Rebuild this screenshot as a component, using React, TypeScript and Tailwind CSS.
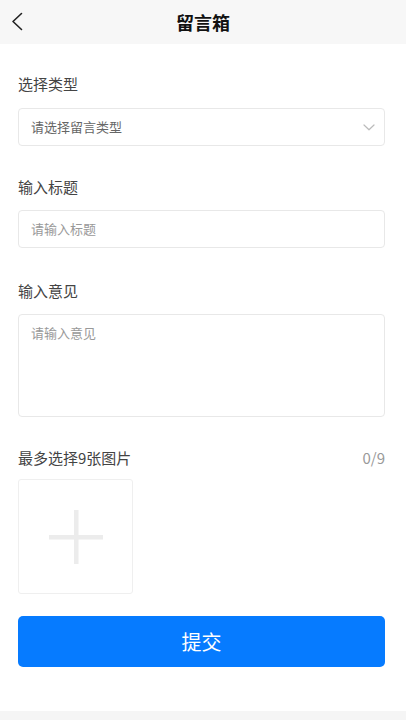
import React from "react";

const font = { fontFamily: '"Noto Sans CJK SC", "Noto Sans", sans-serif' };

export default function App() {
  return (
    <div className="min-h-[720px] w-full bg-[#f5f5f5]" style={font}>
      <div className="relative flex h-[44px] items-center justify-center bg-[#f7f7f7]">
        <svg
          className="absolute left-[10px] top-[12px]"
          width="14"
          height="19"
          viewBox="0 0 14 19"
          fill="none"
        >
          <path d="M11.5 1.5L3 9.5l8.5 8" stroke="#222" strokeWidth="1.6" strokeLinecap="round" strokeLinejoin="round" />
        </svg>
        <span className="text-[18px] font-bold leading-none text-[#111]">留言箱</span>
      </div>

      <div className="flex flex-col bg-white pb-[44px] pl-[18px] pr-[21px] pt-[30px]">
        <div className="h-[20px] text-[15px] leading-[20px] text-[#444]">选择类型</div>
        <div className="mt-[14px] flex h-[38px] items-center justify-between rounded-[4px] border border-[#e8e8e8] pl-[12px] pr-[9px]">
          <span className="text-[13px] text-[#666]">请选择留言类型</span>
          <svg width="12" height="7" viewBox="0 0 12 7" fill="none">
            <path d="M1 1l5 4.8L11 1" stroke="#bbb" strokeWidth="1.2" strokeLinecap="round" strokeLinejoin="round" />
          </svg>
        </div>

        <div className="mt-[31px] h-[20px] text-[15px] leading-[20px] text-[#444]">输入标题</div>
        <div className="mt-[13px] flex h-[38px] items-center rounded-[4px] border border-[#e8e8e8] px-[12px]">
          <span className="text-[13px] text-[#999]">请输入标题</span>
        </div>

        <div className="mt-[33px] h-[20px] text-[15px] leading-[20px] text-[#444]">输入意见</div>
        <div className="mt-[13px] h-[103px] rounded-[4px] border border-[#e8e8e8] px-[12px] pt-[4px]">
          <span className="text-[13px] leading-[20px] text-[#999]">请输入意见</span>
        </div>

        <div className="mt-[31px] flex h-[20px] items-center justify-between text-[15px] leading-[20px]">
          <span className="text-[#444]">最多选择9张图片</span>
          <span className="text-[#999]">0/9</span>
        </div>
        <div className="mt-[11px] flex h-[115px] w-[115px] items-center justify-center rounded-[3px] border border-[#efefef]">
          <svg width="56" height="56" viewBox="0 0 56 56">
            <rect x="26" y="1" width="4.5" height="54" fill="#ececec" />
            <rect x="1" y="26" width="54" height="4.5" fill="#ececec" />
          </svg>
        </div>

        <button className="mt-[22px] flex h-[51px] w-full items-center justify-center rounded-[5px] bg-[#067bff] text-[20px] text-white">
          提交
        </button>
      </div>
    </div>
  );
}
